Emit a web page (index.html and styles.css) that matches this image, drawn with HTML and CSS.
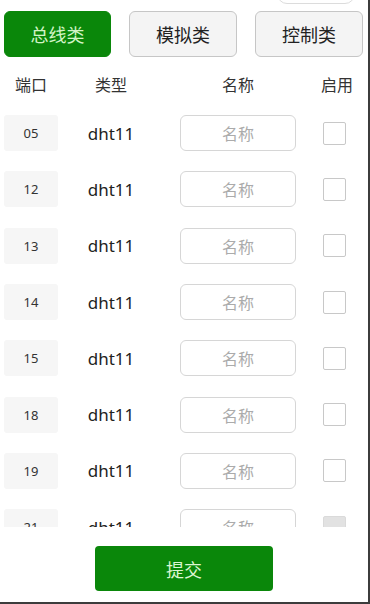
FILE: index.html
```html
<!DOCTYPE html>
<html lang="zh">
<head>
<meta charset="utf-8">
<link rel="stylesheet" href="styles.css">
</head>
<body>
<div class="frame">
  <div class="content">
    <div class="peek"></div>
    <div class="tabs">
      <button class="tab active">总线类</button>
      <button class="tab">模拟类</button>
      <button class="tab">控制类</button>
    </div>
    <div class="grid head">
      <div class="c-port">端口</div>
      <div class="c-type">类型</div>
      <div class="c-name">名称</div>
      <div class="c-en">启用</div>
    </div>
    <div class="grid row"><div class="port">05</div><div class="type">dht11</div><input class="name" placeholder="名称"><span class="check"></span></div>
    <div class="grid row"><div class="port">12</div><div class="type">dht11</div><input class="name" placeholder="名称"><span class="check"></span></div>
    <div class="grid row"><div class="port">13</div><div class="type">dht11</div><input class="name" placeholder="名称"><span class="check"></span></div>
    <div class="grid row"><div class="port">14</div><div class="type">dht11</div><input class="name" placeholder="名称"><span class="check"></span></div>
    <div class="grid row"><div class="port">15</div><div class="type">dht11</div><input class="name" placeholder="名称"><span class="check"></span></div>
    <div class="grid row"><div class="port">18</div><div class="type">dht11</div><input class="name" placeholder="名称"><span class="check"></span></div>
    <div class="grid row"><div class="port">19</div><div class="type">dht11</div><input class="name" placeholder="名称"><span class="check"></span></div>
    <div class="grid row"><div class="port">21</div><div class="type">dht11</div><input class="name" placeholder="名称"><span class="check dim"></span></div>
  </div>
  <div class="footer">
    <button class="submit">提交</button>
  </div>
</div>
</body>
</html>
```
FILE: styles.css
```css
* { box-sizing: border-box; }
html, body { margin: 0; padding: 0; background: #fff; }
body {
  font-family: "Noto Sans", "Noto Sans CJK SC", sans-serif;
  color: #333;
}
.frame {
  width: 370px;
  height: 604px;
  border-right: 2px solid #3c3c3c;
  border-bottom: 2px solid #3c3c3c;
  display: flex;
  flex-direction: column;
  overflow: hidden;
}
.content {
  height: 527px;
  overflow: hidden;
  flex: none;
}
.peek {
  width: 78px;
  height: 30px;
  margin: -26px 0 0 277px;
  border: 1px solid #dcdcdc;
  border-radius: 10px;
}
.tabs {
  display: flex;
  gap: 18px;
  padding-left: 4px;
  margin-top: 7px;
}
.tab {
  width: 108px;
  height: 46px;
  border: 1px solid #c6c6c6;
  border-radius: 6px;
  background: #f4f4f4;
  color: #222;
  font-family: "Noto Sans CJK SC", sans-serif;
  font-size: 18px;
  padding: 0;
}
.tab.active {
  width: 107px;
  background: #0a870a;
  border-color: #0a870a;
  color: #d2f4c6;
}
.grid {
  display: grid;
  grid-template-columns: 54px 106px 132px 66px;
  padding-left: 4px;
  align-items: center;
}
.head {
  height: 32px;
  margin-top: 11px;
  margin-bottom: 5px;
  font-family: "Noto Sans CJK SC", sans-serif;
  font-size: 16px;
  color: #333;
}
.c-port, .c-type { text-align: center; }
.c-name { justify-self: end; width: 116px; text-align: center; }
.c-en { margin-left: 25px; }
.row { height: 56.3px; }
.port {
  height: 36px;
  background: #f6f6f6;
  border-radius: 3px;
  display: flex;
  align-items: center;
  justify-content: center;
  font-size: 13px;
  color: #333;
}
.type {
  text-align: center;
  font-size: 17px;
  color: #222;
}
.name {
  justify-self: end;
  width: 116px;
  height: 36px;
  border: 1px solid #d6d6d6;
  border-radius: 6px;
  background: #fff;
  text-align: center;
  font-family: "Noto Sans CJK SC", sans-serif;
  font-size: 16px;
  padding: 0;
  outline: none;
}
.name::placeholder { color: #ababab; }
.check {
  justify-self: start;
  margin-left: 27px;
  width: 23px;
  height: 23px;
  border: 1px solid #c8c8c8;
  border-radius: 2px;
  background: #fff;
}
.check.dim { background: #e2e2e2; border-color: #dadada; }
.footer {
  flex: 1;
  display: flex;
  justify-content: center;
  padding-top: 19px;
}
.submit {
  width: 178px;
  height: 45px;
  border: none;
  border-radius: 4px;
  background: #0a870a;
  color: #dcf6d2;
  font-family: "Noto Sans CJK SC", sans-serif;
  font-size: 18px;
  padding: 0;
}
```
